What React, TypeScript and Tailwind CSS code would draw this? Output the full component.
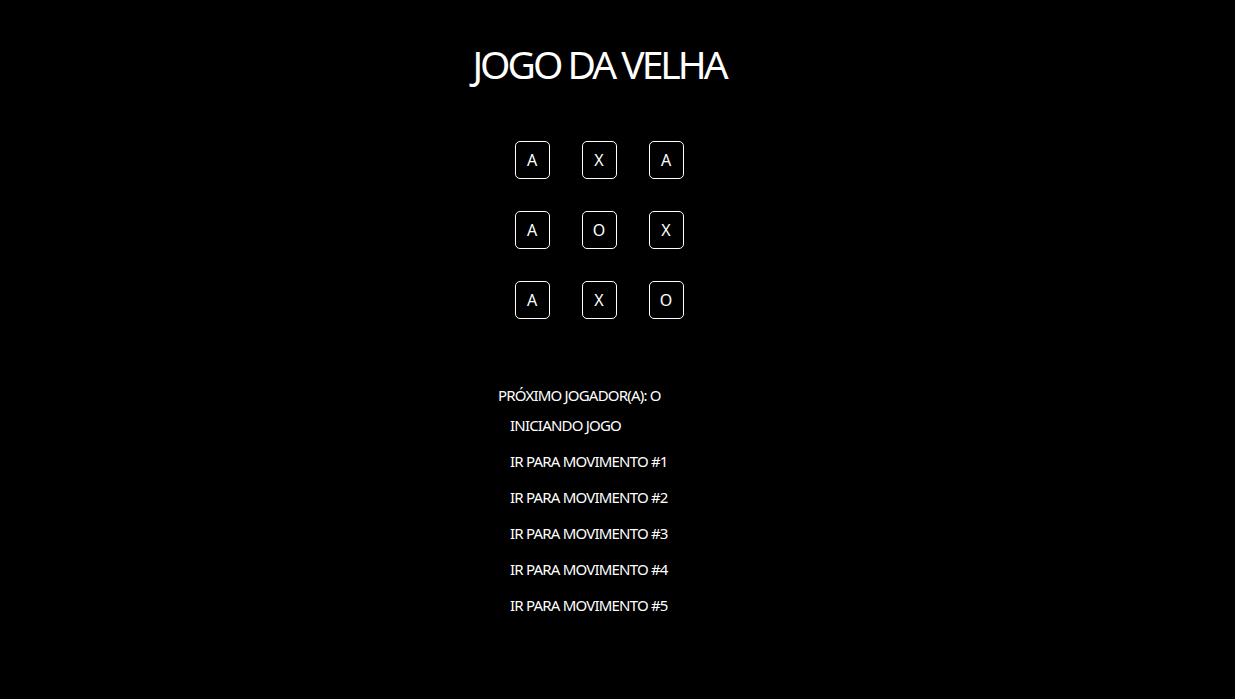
const cells = ["A", "X", "A", "A", "O", "X", "A", "X", "O"];
const moves = ["INICIANDO JOGO", "IR PARA MOVIMENTO #1", "IR PARA MOVIMENTO #2", "IR PARA MOVIMENTO #3", "IR PARA MOVIMENTO #4", "IR PARA MOVIMENTO #5"];

export default function App() {
  return (
    <div className="min-h-[699px] bg-black text-white font-['Noto_Sans',sans-serif]">
      <div className="w-[1198px] flex flex-col items-center">
        <h1 className="mt-[36px] text-[39px] leading-[56px] tracking-[-3px]">JOGO DA VELHA</h1>
        <div className="mt-[49px] grid grid-cols-3 gap-x-[32px] gap-y-[32px]">
          {cells.map((c, i) => (
            <button
              key={i}
              className="w-[35px] h-[38px] border border-white rounded-[5px] text-[16px] flex items-center justify-center"
            >
              {c}
            </button>
          ))}
        </div>
        <div className="mt-[64px] w-[164px] mr-[38px] text-[15px] tracking-[-0.8px] whitespace-nowrap">
          <div className="leading-[24px]">PRÓXIMO JOGADOR(A): O</div>
          <ol className="mt-[6px] pl-[12px]">
            {moves.map((m) => (
              <li key={m} className="leading-[24px] mb-[12px]">
                <button>{m}</button>
              </li>
            ))}
          </ol>
        </div>
      </div>
    </div>
  );
}
